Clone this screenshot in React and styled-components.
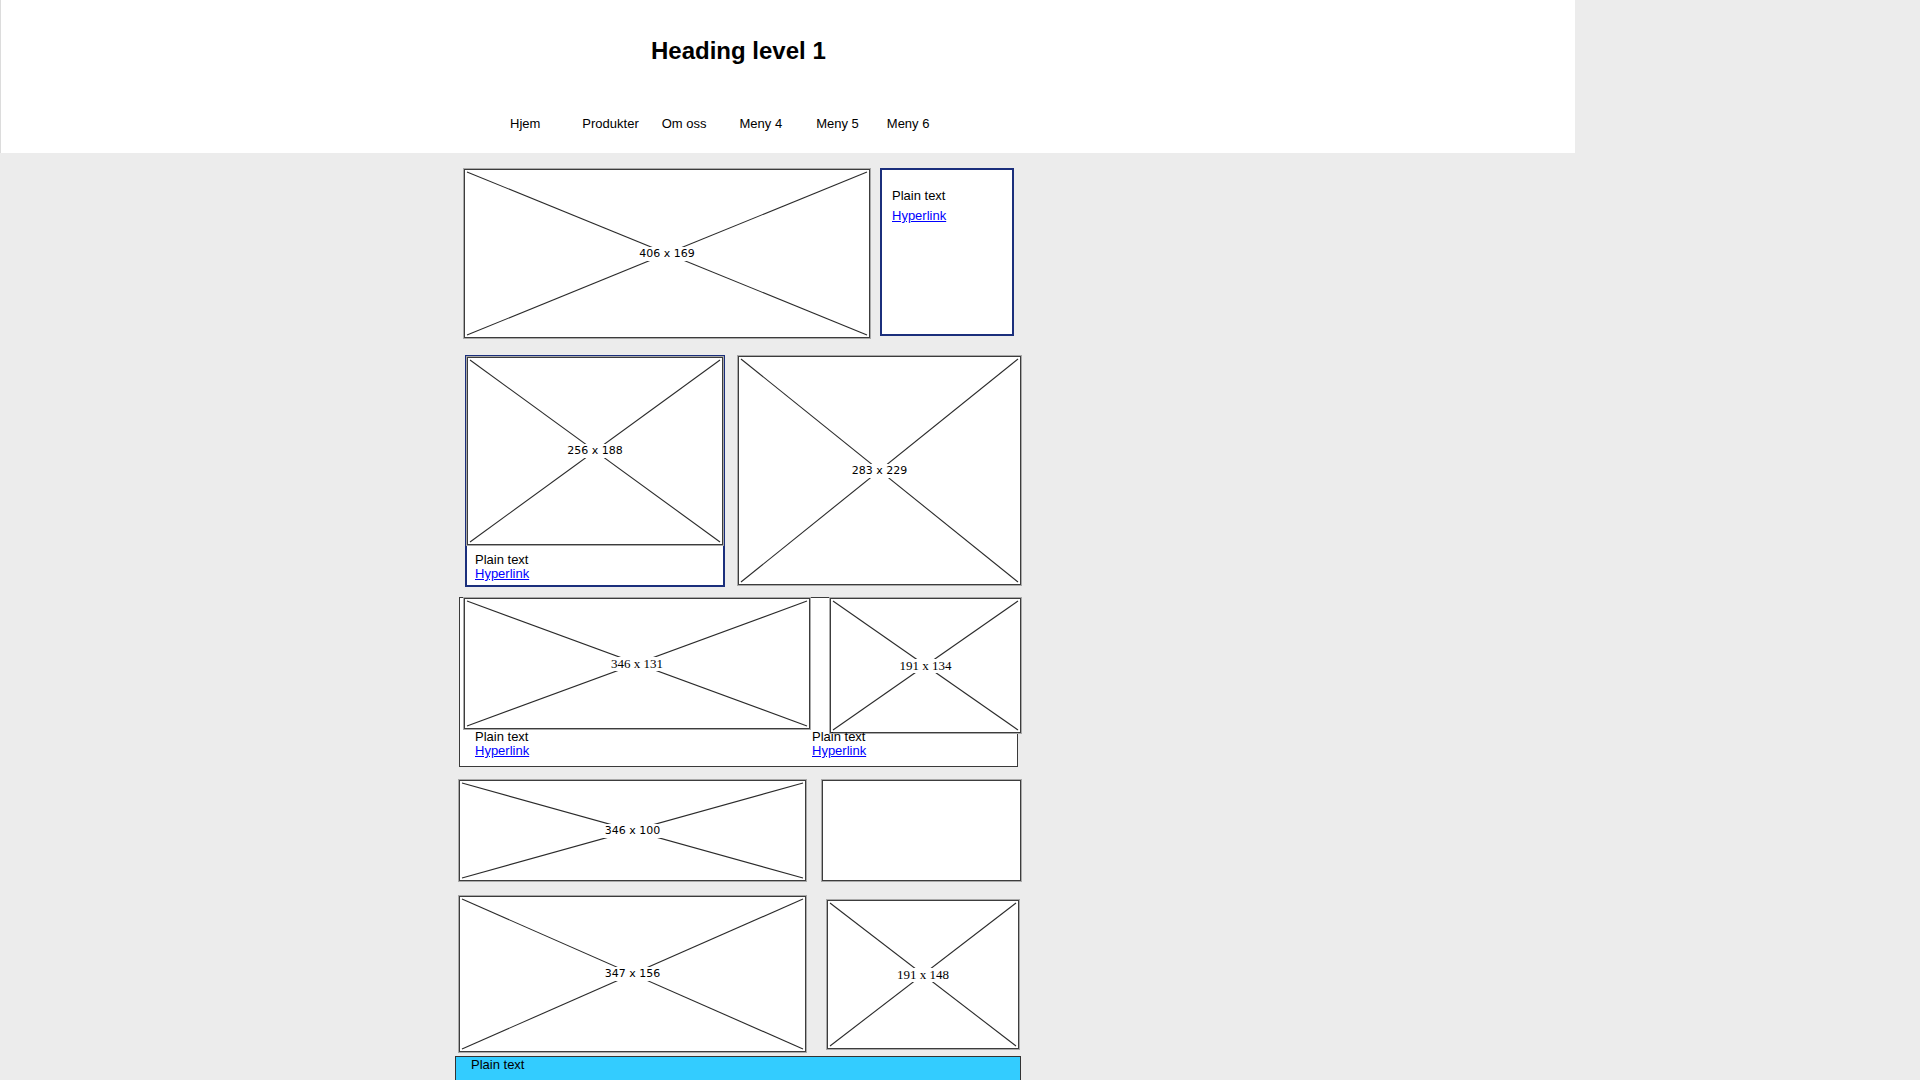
import React from 'react';
import styled, { createGlobalStyle } from 'styled-components';

const GlobalStyle = createGlobalStyle`
  html, body {
    margin: 0;
    padding: 0;
  }
  body {
    background: #ececec;
    font-family: "Liberation Sans", Arial, sans-serif;
    color: #000;
  }
  * {
    box-sizing: border-box;
  }
`;

const Header = styled.header`
  width: 1575px;
  height: 153px;
  background: #fff;
  border-left: 1px solid #dcdcdc;
  display: flex;
  flex-direction: column;
`;

const Title = styled.h1`
  margin: 37px 0 0 650px;
  font-size: 24px;
  line-height: 28px;
  font-weight: 700;
`;

const Nav = styled.nav`
  display: flex;
  margin-top: 51px;
  padding-left: 509px;
`;

const NavItem = styled.span`
  font-size: 13px;
  line-height: 15px;
  margin-left: ${(p) => p.$ml || 0}px;
  white-space: nowrap;
`;

const Column = styled.main`
  margin-left: 455px;
  width: 566px;
  padding-top: 15px;
  display: flex;
  flex-direction: column;
`;

const Row = styled.div`
  display: flex;
  align-items: flex-start;
  gap: ${(p) => p.$gap || 0}px;
  padding-left: ${(p) => p.$pl || 0}px;
  margin-top: ${(p) => p.$mt || 0}px;
`;

const Frame = styled.div`
  flex-shrink: 0;
  width: ${(p) => p.$w}px;
  height: ${(p) => p.$h}px;
  margin-top: ${(p) => p.$mt || 0}px;
  margin-left: ${(p) => p.$ml || 0}px;
  background: #fff;
  border: 1px solid #3c3c3c;
  box-shadow: 0 0 0 1px #a9a9a9;
  display: grid;
`;

const Cross = styled.svg`
  grid-area: 1 / 1;
  display: block;
`;

const Label = styled.span`
  grid-area: 1 / 1;
  place-self: center;
  background: #fff;
  padding: 0 4px;
  font-family: ${(p) => (p.$serif ? '"Liberation Serif", "Times New Roman", serif' : '"DejaVu Sans", Tahoma, sans-serif')};
  font-size: ${(p) => (p.$serif ? 13 : 11)}px;
  line-height: 14px;
  white-space: nowrap;
`;

function Placeholder({ w, h, label, serif, mt, ml }) {
  const iw = w - 2;
  const ih = h - 2;
  return (
    <Frame $w={w} $h={h} $mt={mt} $ml={ml}>
      <Cross width={iw} height={ih} viewBox={`0 0 ${iw} ${ih}`}>
        <g stroke="#2b2b2b" strokeWidth="1.1" fill="none">
          <line x1="2" y1="2" x2={iw - 2} y2={ih - 2} />
          <line x1={iw - 2} y1="2" x2="2" y2={ih - 2} />
        </g>
      </Cross>
      {label && <Label $serif={serif}>{label}</Label>}
    </Frame>
  );
}

const EmptyBox = styled.div`
  width: ${(p) => p.$w}px;
  height: ${(p) => p.$h}px;
  background: #fff;
  border: 1px solid #3c3c3c;
  box-shadow: 0 0 0 1px #a9a9a9;
`;

const Panel = styled.div`
  flex-shrink: 0;
  width: ${(p) => p.$w}px;
  height: ${(p) => p.$h}px;
  background: #fff;
  border: 2px solid #1b2f7c;
  display: flex;
  flex-direction: column;
`;

const Caption = styled.div`
  display: flex;
  flex-direction: column;
  align-items: flex-start;
  padding: ${(p) => p.$pt || 0}px 0 0 ${(p) => p.$pl || 0}px;
  margin-top: ${(p) => p.$mt || 0}px;
  font-size: 13px;
  line-height: 14px;
`;

const Text = styled.span`
  white-space: nowrap;
`;

const Link = styled.a`
  color: #0000ff;
  text-decoration: underline;
  white-space: nowrap;
  margin-top: ${(p) => p.$mt || 0}px;
`;

const Group = styled.div`
  margin-left: 4px;
  width: 559px;
  height: 170px;
  background: #fff;
  border: 1px solid #3a3a3a;
  display: flex;
`;

const Cell = styled.div`
  flex-shrink: 0;
  display: flex;
  flex-direction: column;
  padding-left: ${(p) => p.$pl || 0}px;
`;

const Footer = styled.div`
  margin-top: 4px;
  width: 566px;
  height: 40px;
  background: #33ccff;
  border: 1px solid #333;
  padding: 1px 15px;
  font-size: 13px;
  line-height: 14px;
`;

const menu = [
  { label: 'Hjem', ml: 0 },
  { label: 'Produkter', ml: 42 },
  { label: 'Om oss', ml: 23 },
  { label: 'Meny 4', ml: 33 },
  { label: 'Meny 5', ml: 34 },
  { label: 'Meny 6', ml: 28 },
];

export default function App() {
  return (
    <>
      <GlobalStyle />
      <Header>
        <Title>Heading level 1</Title>
        <Nav>
          {menu.map((m) => (
            <NavItem key={m.label} $ml={m.ml}>
              {m.label}
            </NavItem>
          ))}
        </Nav>
      </Header>

      <Column>
        <Row $pl={9} $gap={10}>
          <Placeholder w={406} h={169} mt={1} label="406 x 169" />
          <Panel $w={134} $h={168}>
            <Caption $pt={19} $pl={10}>
              <Text>Plain text</Text>
              <Link href="#" $mt={6}>Hyperlink</Link>
            </Caption>
          </Panel>
        </Row>

        <Row $pl={10} $gap={13} $mt={17}>
          <Panel $w={260} $h={232}>
            <Placeholder w={256} h={188} label="256 x 188" />
            <Caption $pt={8} $pl={8}>
              <Text>Plain text</Text>
              <Link href="#">Hyperlink</Link>
            </Caption>
          </Panel>
          <Placeholder w={283} h={229} mt={1} label="283 x 229" />
        </Row>

        <Row $mt={10}>
          <Group>
            <Cell $pl={4}>
              <Placeholder w={346} h={131} label="346 x 131" serif />
              <Caption $pl={11} $mt={1}>
                <Text>Plain text</Text>
                <Link href="#">Hyperlink</Link>
              </Caption>
            </Cell>
            <Cell $pl={2}>
              <Placeholder w={191} h={135} ml={18} label="191 x 134" serif />
              <Caption $mt={-3}>
                <Text>Plain text</Text>
                <Link href="#">Hyperlink</Link>
              </Caption>
            </Cell>
          </Group>
        </Row>

        <Row $pl={4} $mt={13} $gap={16}>
          <Placeholder w={347} h={101} label="346 x 100" />
          <EmptyBox $w={199} $h={101} />
        </Row>

        <Row $pl={4} $mt={15} $gap={21}>
          <Placeholder w={347} h={156} label="347 x 156" />
          <Placeholder w={192} h={149} mt={4} label="191 x 148" serif />
        </Row>

        <Footer>Plain text</Footer>
      </Column>
    </>
  );
}
